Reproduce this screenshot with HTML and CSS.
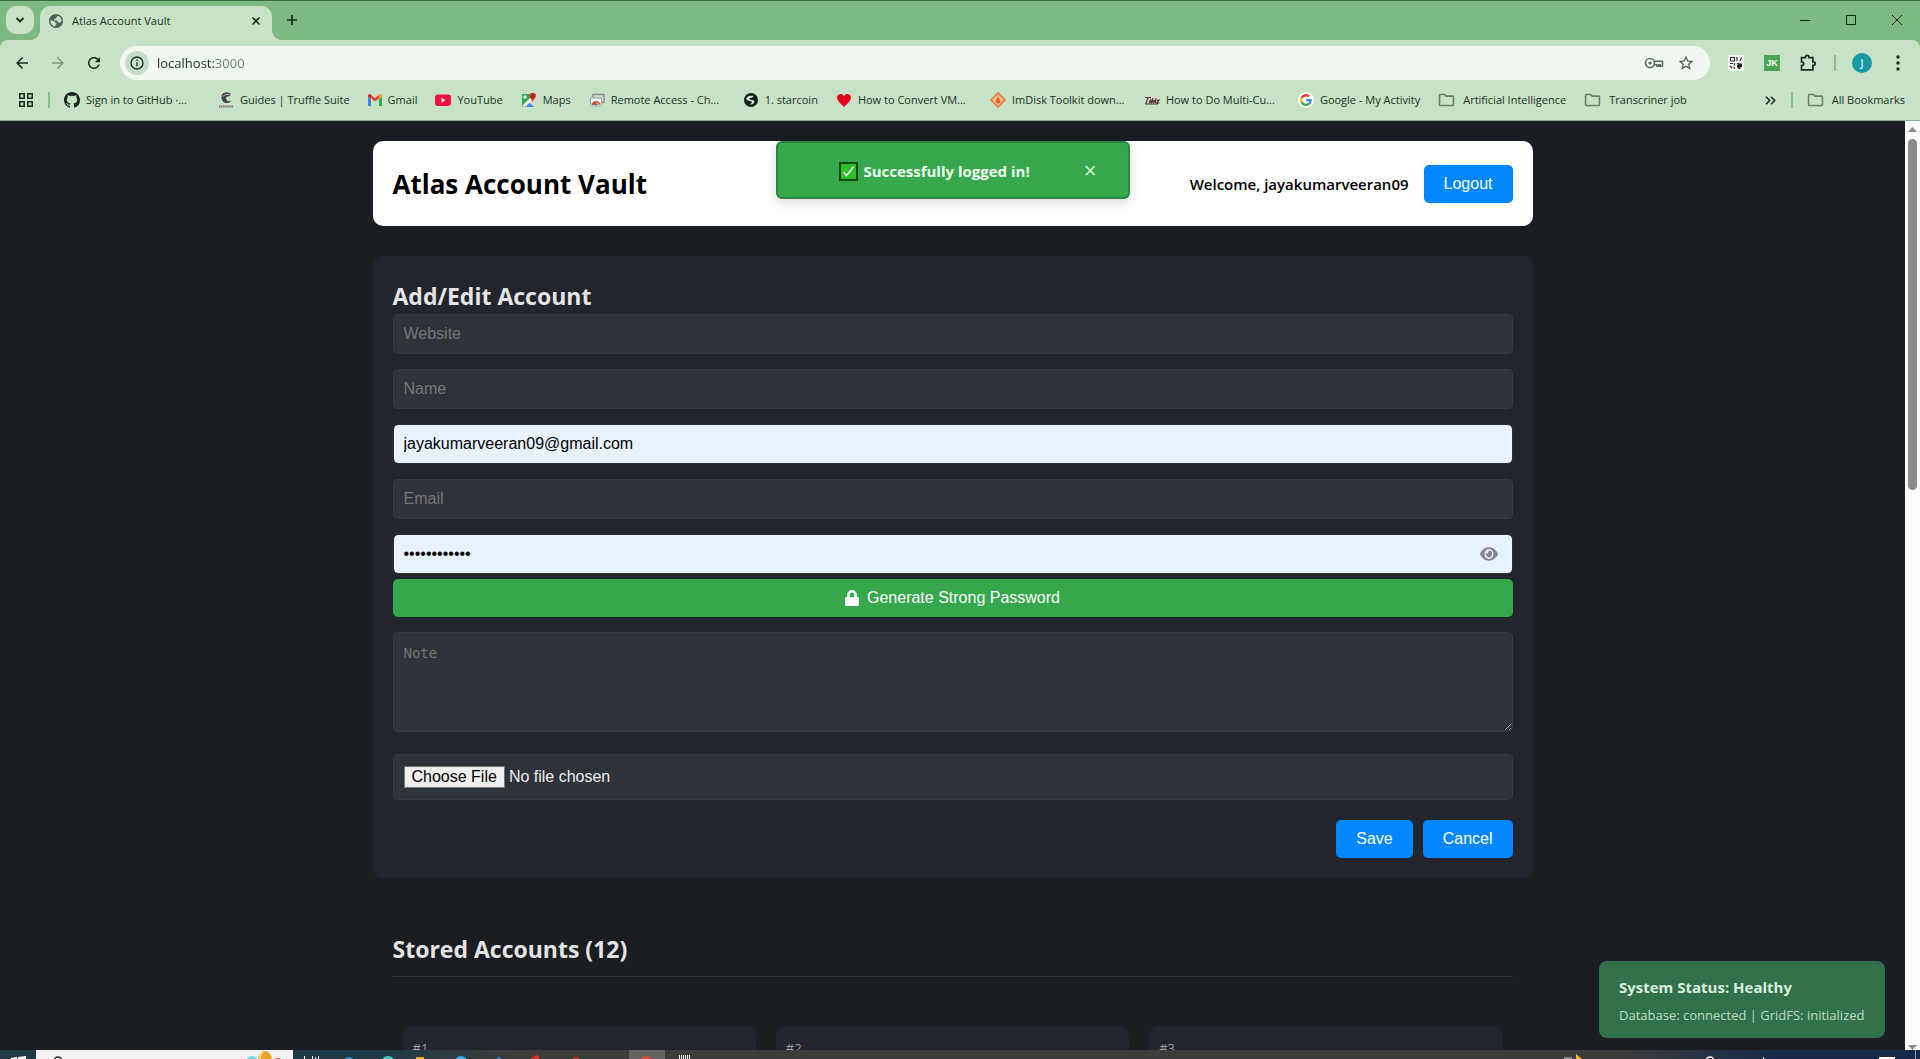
FILE: index.html
```html
<!DOCTYPE html>
<html lang="en">
<head>
<meta charset="utf-8">
<title>Atlas Account Vault</title>
<link rel="stylesheet" href="styles.css">
</head>
<body>
<svg class="defs" aria-hidden="true">
  <symbol id="globe" viewBox="2 2 20 20"><path d="M12 2C6.48 2 2 6.48 2 12s4.48 10 10 10 10-4.48 10-10S17.52 2 12 2zm-1 17.93c-3.95-.49-7-3.85-7-7.93l0-1L8 11.600c1.500 0 2.500 1 2.500 2.400h2v3c-.9 0-1.500.9-1.500 2.930zM20 12c-1 1.800-2.500 2.500-4 2.500-1 0-1-1.500-2-2.500-1.200-1-4.500.5-5-2 0-1.500 2-1 3-1.500 1-.6 0-2 1-2.500 1-.4 2-.9 2-1.410 2.930 1.190 5 4.060 5 7.410z"/></symbol>
  <symbol id="folder" viewBox="1 3 22 18"><path d="M9.170 6l2 2H20v10H4V6h5.170M10 4H4c-1.100 0-1.990.9-1.990 2L2 18c0 1.100.9 2 2 2h16c1.100 0 2-.9 2-2V8c0-1.100-.9-2-2-2h-8l-2-2z"/></symbol>
</svg>

<div class="window">
  <header class="chrome">
    <div class="tabstrip">
      <button class="tab-search" aria-label="Search tabs"><svg width="10" height="10" viewBox="0 0 10 10"><path d="M1.500 3l3.500 3.500L8.500 3" fill="none" stroke="#12301a" stroke-width="1.800"/></svg></button>
      <div class="tab">
        <svg class="tab-icon" width="14" height="14"><use href="#globe"/></svg>
        <span class="tab-title">Atlas Account Vault</span>
        <button class="plain" aria-label="Close tab"><svg width="10" height="10" viewBox="0 0 10 10"><path d="M1.500 1.500l7 7M8.500 1.500l-7 7" stroke="#12301a" stroke-width="1.600"/></svg></button>
      </div>
      <button class="plain new-tab" aria-label="New tab"><svg width="12" height="12" viewBox="0 0 12 12"><path d="M6 1v10M1 6h10" stroke="#12301a" stroke-width="1.700"/></svg></button>
      <div class="window-controls">
        <button class="plain" aria-label="Minimize"><svg width="10" height="10" viewBox="0 0 10 10"><path d="M0 5.500h10" stroke="#10220f"/></svg></button>
        <button class="plain" aria-label="Maximize"><svg width="10" height="10" viewBox="0 0 10 10"><path d="M.5.5h9v9h-9z" fill="none" stroke="#10220f"/></svg></button>
        <button class="plain" aria-label="Close"><svg width="10" height="10" viewBox="0 0 10 10"><path d="M0 0l10 10M10 0L0 10" stroke="#10220f"/></svg></button>
      </div>
    </div>

    <div class="toolbar">
      <button class="tool" aria-label="Back"><svg width="18" height="18" viewBox="0 0 24 24"><path d="M20 11H7.830l5.590-5.590L12 4l-8 8 8 8 1.410-1.410L7.830 13H20v-2z"/></svg></button>
      <button class="tool faded" aria-label="Forward"><svg width="18" height="18" viewBox="0 0 24 24"><path d="M4 11h12.170l-5.590-5.590L12 4l8 8-8 8-1.410-1.410L16.170 13H4v-2z"/></svg></button>
      <button class="tool" aria-label="Reload"><svg width="18" height="18" viewBox="0 0 24 24"><path d="M17.650 6.350C16.200 4.900 14.210 4 12 4c-4.420 0-7.990 3.580-7.990 8s3.570 8 7.990 8c3.730 0 6.840-2.550 7.730-6h-2.080c-.82 2.330-3.040 4-5.650 4-3.310 0-6-2.690-6-6s2.690-6 6-6c1.660 0 3.140.69 4.220 1.780L13 11h7V4l-2.350 2.350z"/></svg></button>
      <div class="omnibox">
        <button class="site-info" aria-label="Site information"><svg width="14" height="14" viewBox="0 0 14 14"><circle cx="7" cy="7" r="6" fill="none" stroke="#1c3322" stroke-width="1.400"/><path d="M7 6.200v4M7 3.500v1.500" stroke="#1c3322" stroke-width="1.400"/></svg></button>
        <input class="address" type="text" value="localhost:3000" aria-label="Address">
        <div class="omnibox-actions">
          <svg width="20" height="12" viewBox="0 0 20 12"><circle cx="6" cy="6" r="4.500" fill="none" stroke="#5c6b60" stroke-width="1.600"/><circle cx="6" cy="6" r="1.600" fill="#5c6b60"/><path d="M10.500 4.200h8v5h-2.200V7.800h-1.500v1.400h-2V7.800h-2.300" fill="none" stroke="#5c6b60" stroke-width="1.500"/></svg>
          <svg width="18" height="18" viewBox="0 0 24 24" fill="#4a574d"><path d="M22 9.240l-7.190-.62L12 2 9.190 8.630 2 9.240l5.460 4.730L5.820 21 12 17.270 18.180 21l-1.630-7.030L22 9.240zM12 15.400l-3.760 2.270 1-4.280-3.320-2.880 4.380-.38L12 6.100l1.710 4.040 4.380.38-3.320 2.880 1 4.280L12 15.400z"/></svg>
        </div>
      </div>
      <button class="tool" aria-label="QR extension"><svg width="16" height="16" viewBox="0 0 16 16"><rect width="16" height="16" rx="2" fill="#f5f5f5"/><path d="M2.500 2.500h4v3.500h-4zM9 2v4M9 8.500h2M13.500 2.500l-1.500 3.500M2 8.500h3M6.500 8v2.500M2 11l2 2M5.500 12l1.500 1.500" fill="none" stroke="#333" stroke-width="1.200"/><path d="M9 11a3 3 0 0 1 5-2v3h-1.500v2H11a3 3 0 0 1-2-3z" fill="#222"/></svg></button>
      <button class="tool" aria-label="JK extension"><span class="jk">JK</span></button>
      <button class="tool" aria-label="Extensions"><svg width="18" height="18" viewBox="0 0 18 18"><path d="M2.500 3.700h4V3a1.700 1.700 0 0 1 3.400 0v.7h4v4.200h.6a1.700 1.700 0 0 1 0 3.400h-.6v4.500H2.500v-4.300c2.800-.2 2.800-3.500 0-3.700z" fill="none" stroke="#14301c" stroke-width="1.700"/></svg></button>
      <span class="divider"></span>
      <button class="tool" aria-label="Profile"><span class="avatar">J</span></button>
      <button class="tool" aria-label="Menu"><svg width="4" height="16" viewBox="0 0 4 16"><circle cx="2" cy="2" r="1.700"/><circle cx="2" cy="8" r="1.700"/><circle cx="2" cy="14" r="1.700"/></svg></button>
    </div>

    <nav class="bookmarks" aria-label="Bookmarks">
      <button class="plain apps" aria-label="Apps"><svg width="14" height="14" viewBox="0 0 14 14"><path d="M.8.800h4.400v4.400H.8zM8.800.800h4.400v4.400H8.800zM.8 8.800h4.400v4.400H.8zM8.800 8.800h4.400v4.400H8.800z" fill="none" stroke="#14301c" stroke-width="1.600"/></svg></button>
      <span class="divider"></span>
      <a class="bookmark wide" href="#"><svg width="16" height="16" viewBox="0 0 16 16" fill="#1c2620"><path d="M8 0C3.580 0 0 3.580 0 8c0 3.540 2.290 6.530 5.470 7.590.4.070.55-.17.55-.38 0-.19-.01-.82-.01-1.490-2.010.37-2.530-.49-2.690-.94-.09-.23-.48-.94-.82-1.130-.28-.15-.68-.52-.01-.53.63-.01 1.080.58 1.230.82.72 1.210 1.870.87 2.330.66.070-.52.28-.87.51-1.070-1.780-.2-3.640-.89-3.640-3.950 0-.87.31-1.590.82-2.150-.08-.2-.36-1.020.08-2.120 0 0 .67-.21 2.200.82.64-.18 1.320-.27 2-.27.68 0 1.360.09 2 .27 1.530-1.040 2.200-.82 2.200-.82.44 1.100.16 1.920.08 2.120.51.56.82 1.270.82 2.150 0 3.070-1.870 3.750-3.650 3.950.29.25.54.73.54 1.480 0 1.070-.01 1.930-.01 2.200 0 .21.15.46.55.38A8.010 8.010 0 0016 8c0-4.420-3.580-8-8-8z"/></svg>Sign in to GitHub ·...</a>
      <a class="bookmark" href="#"><svg width="16" height="16" viewBox="0 0 16 16"><path d="M12.500 1.500C9-.8 4 .5 3.500 4.200 3 8 5.500 11 9 11c2 0 3.500-1 4-2.300C11 9.700 8.500 9 8 6.500 7.800 4.500 10 4.500 12 4z" fill="#4c4350"/><path d="M5 4.500c1-2 4-2.500 6.500-2" stroke="#cfe5cf" stroke-width=".8" fill="none"/><path d="M1 14.500h14" stroke="#8d6a78" stroke-width="2" stroke-dasharray="1.500 .6"/></svg>Guides | Truffle Suite</a>
      <a class="bookmark" href="#"><svg width="14" height="16" viewBox="1 0 14 16"><path d="M1 4v10h3V7z" fill="#4285f4"/><path d="M12 7v7h3V4z" fill="#34a853"/><path d="M1 4l7 5.500L15 4c0-1.800-2-2-3-1.200L8 6 4 2.800C3 2 1 2.200 1 4z" fill="#ea4335"/><path d="M12 3v3.500l3-2.300c0-2-2-2.200-3-1.200z" fill="#fbbc04"/><path d="M1 4.200l3 2.300V3C3 2 1 2.200 1 4.200z" fill="#c5221f"/></svg>Gmail</a>
      <a class="bookmark" href="#"><svg width="16" height="16" viewBox="0 0 16 16"><rect y="2.500" width="16" height="11.500" rx="3" fill="#f0103c"/><path d="M6.500 5.800v4.900l4-2.450z" fill="#fff"/></svg>YouTube</a>
      <a class="bookmark" href="#"><svg width="16" height="16" viewBox="0 0 16 16"><path d="M1 2h9v6L2 15 1 14z" fill="#34a853"/><path d="M3 15l5-5 5 5z" fill="#4285f4"/><path d="M1.500 13.500L10 5l2 3-8 7z" fill="#eef3ee"/><path d="M9 9l5 5V8z" fill="#d5d9d5"/><circle cx="4" cy="5" r="1.700" fill="#d8f0dc"/><path d="M8.500 4a3.200 3.200 0 0 1 6.400 0c0 2.500-2.600 3-3.200 6.500C11 7 8.500 6.500 8.500 4z" fill="#d93025"/><circle cx="11.700" cy="4" r="1.200" fill="#7d1b14"/></svg>Maps</a>
      <a class="bookmark wide" href="#"><svg width="16" height="16" viewBox="0 0 16 16"><path d="M4 5V2.500h11v8h-2" fill="none" stroke="#8d8f96" stroke-width="1.500"/><path d="M1.500 6h11v6h-11z" fill="#f2f2f2" stroke="#9a9ca3"/><path d="M3 13a4 4 0 0 1 8 0z" fill="#db4437"/><path d="M7 9.500l4 3.500H7z" fill="#f4c20d"/><circle cx="7" cy="12.500" r="1.500" fill="#4285f4"/><path d="M0 14h14" stroke="#b9bbc0"/></svg>Remote Access - Ch...</a>
      <a class="bookmark" href="#"><svg width="16" height="16" viewBox="0 0 16 16"><circle cx="8" cy="8" r="7" fill="#141c18"/><path d="M3 7c1.500-4 5-3.500 7.500-3-1 2.500-4 1-4 3 1 1.500 5 .5 5 2.500-.5 2-2.500 3.500-4.500 3 .5-1.500 2-1 2-2.500C8 8.500 5.500 9.500 3 7z" fill="#d9ecd9"/></svg>1. starcoin</a>
      <a class="bookmark wide" href="#"><svg width="16" height="16" viewBox="0 0 16 16"><path d="M8 15C5 12 1 9 1 5.500 1 1.500 6 .8 8 4c2-3.200 7-2.500 7 1.500C15 9 11 12 8 15z" fill="#e3051b"/></svg>How to Convert VM...</a>
      <a class="bookmark wide" href="#"><svg width="16" height="16" viewBox="0 0 16 16"><path d="M8 1l7 7-7 7-7-7z" fill="#f6c6a0" stroke="#e8834a" stroke-width="1.800"/><path d="M8 4c0 2 2.500 3 2.500 5a2.500 2.500 0 0 1-5 0c0-1.500 1.500-2 2.500-5z" fill="#e0662c"/></svg>ImDisk Toolkit down...</a>
      <a class="bookmark wide" href="#"><svg width="16" height="16" viewBox="0 0 16 16"><path d="M1 5.500h6M4 5.500l-2 6M5 11l1.500-3 .5 3 1.500-3.500M9 6l-1 5M10 8l-.5 3 2-3M12 6l-.5 5M13 8.500l2-.5-2 3h2.500M1 12h13" fill="none" stroke="#5b3236" stroke-width="1.200"/></svg>How to Do Multi-Cu...</a>
      <a class="bookmark" href="#"><svg width="16" height="16" viewBox="-8 -8 64 64"><circle cx="24" cy="24" r="32" fill="#fff"/><path fill="#EA4335" d="M24 9.500c3.540 0 6.710 1.220 9.210 3.600l6.850-6.850C35.900 2.380 30.470 0 24 0 14.620 0 6.510 5.380 2.560 13.220l7.980 6.190C12.430 13.720 17.740 9.500 24 9.500z"/><path fill="#4285F4" d="M46.980 24.550c0-1.570-.15-3.090-.38-4.550H24v9.020h12.940c-.58 2.960-2.260 5.480-4.780 7.180l7.730 6c4.510-4.180 7.090-10.360 7.090-17.650z"/><path fill="#FBBC05" d="M10.530 28.590c-.48-1.450-.76-2.990-.76-4.590s.27-3.140.76-4.590l-7.980-6.190C.92 16.460 0 20.120 0 24s.92 7.540 2.560 10.780l7.970-6.190z"/><path fill="#34A853" d="M24 48c6.480 0 11.930-2.130 15.890-5.810l-7.730-6c-2.150 1.450-4.920 2.300-8.160 2.300-6.260 0-11.570-4.220-13.470-9.910l-7.980 6.190C6.510 42.620 14.620 48 24 48z"/></svg>Google - My Activity</a>
      <a class="bookmark folder" href="#"><svg width="17" height="14"><use href="#folder"/></svg>Artificial Intelligence</a>
      <a class="bookmark folder" href="#"><svg width="17" height="14"><use href="#folder"/></svg>Transcriner job</a>
      <button class="plain more" aria-label="More bookmarks"><svg width="11" height="9" viewBox="0 0 11 9"><path d="M1 .8l3.700 3.700L1 8.200M6 .8l3.700 3.700L6 8.200" fill="none" stroke="#14301c" stroke-width="1.600"/></svg></button>
      <span class="divider"></span>
      <a class="bookmark folder" href="#"><svg width="17" height="14"><use href="#folder"/></svg>All Bookmarks</a>
    </nav>
  </header>

  <div class="viewport">
    <div class="page">
      <main class="container">
        <div class="app-header">
          <h1>Atlas Account Vault</h1>
          <div class="user">
            <span class="welcome">Welcome, jayakumarveeran09</span>
            <button class="btn">Logout</button>
          </div>
          <div class="toast" role="status">
            <span class="toast-text"><svg width="19" height="19" viewBox="0 0 19 19"><path d="M1 1h17v17H1z" fill="#2fbf2a" stroke="#0d4a12" stroke-width="2"/><path d="M4.500 10l3 3.500L14.500 5" fill="none" stroke="#e9ffe9" stroke-width="1.600"/></svg>Successfully logged in!</span>
            <button class="toast-close" aria-label="Dismiss">×</button>
          </div>
        </div>

        <form class="card">
          <h2>Add/Edit Account</h2>
          <input class="field" type="text" placeholder="Website" aria-label="Website">
          <input class="field" type="text" placeholder="Name" aria-label="Name">
          <input class="field filled" type="text" value="jayakumarveeran09@gmail.com" aria-label="Username">
          <input class="field" type="email" placeholder="Email" aria-label="Email">
          <div class="password">
            <input class="field filled" type="password" value="vaultsecret1" aria-label="Password">
            <button type="button" class="reveal" aria-label="Show password"><svg width="18" height="18" viewBox="0 0 576 512" preserveAspectRatio="none"><path d="M572.520 241.400C518.290 135.590 410.930 64 288 64S57.680 135.640 3.480 241.410a32.350 32.350 0 0 0 0 29.190C57.710 376.410 165.070 448 288 448s230.320-71.640 284.520-177.410a32.350 32.350 0 0 0 0-29.190zM288 400a144 144 0 1 1 144-144 143.930 143.930 0 0 1-144 144zm0-240a95.310 95.310 0 0 0-25.310 3.790 47.850 47.850 0 0 1-66.900 66.900A95.780 95.780 0 1 0 288 160z"/></svg></button>
          </div>
          <button type="button" class="btn generate"><svg width="14" height="16" viewBox="0 0 448 512"><path d="M400 224h-24v-72C376 68.200 307.800 0 224 0S72 68.200 72 152v72H48c-26.500 0-48 21.500-48 48v192c0 26.500 21.500 48 48 48h352c26.500 0 48-21.500 48-48V272c0-26.500-21.500-48-48-48zm-104 0H152v-72c0-39.700 32.300-72 72-72s72 32.300 72 72v72z"/></svg>Generate Strong Password</button>
          <textarea class="field note" placeholder="Note" aria-label="Note"></textarea>
          <input class="field file" type="file" aria-label="Attachment">
          <div class="actions">
            <button type="button" class="btn">Save</button>
            <button type="button" class="btn">Cancel</button>
          </div>
        </form>

        <section class="stored">
          <h2>Stored Accounts (12)</h2>
          <div class="accounts">
            <article class="account">#1</article>
            <article class="account">#2</article>
            <article class="account">#3</article>
          </div>
        </section>
      </main>
      <aside class="status">
        <strong>System Status: Healthy</strong>
        <span>Database: connected | GridFS: initialized</span>
      </aside>
    </div>
    <div class="scrollbar" aria-hidden="true">
      <svg width="9" height="5" viewBox="0 0 9 5"><path d="M0 5L4.500 0 9 5z" fill="#8b8b8b"/></svg>
      <div class="track"><div class="thumb"></div></div>
      <svg width="9" height="5" viewBox="0 0 9 5"><path d="M0 0l4.500 5L9 0z" fill="#8b8b8b"/></svg>
    </div>
  </div>

  <footer class="taskbar" aria-hidden="true">
    <svg width="720" height="9" viewBox="0 0 720 9">
      <path d="M11 9V8l6-1v2zM18 7l8-1v3h-8z" fill="#fff"/>
      <path d="M36 0h257v9H36z" fill="#f2f2f2"/>
      <circle cx="58" cy="11" r="4" fill="none" stroke="#222" stroke-width="1.500"/>
      <circle cx="252" cy="12" r="6" fill="#6fdde0"/><circle cx="278" cy="14" r="6" fill="#e2474b"/><ellipse cx="265" cy="10" rx="7" ry="9" fill="#e8a32c"/><path d="M260 9c0-4 2-7 4-8" stroke="#f8d67a" stroke-width="2" fill="none"/>
      <path d="M304.500 6v3M312.500 6v3M315.500 7v2M318.500 6v3" stroke="#fff"/>
      <circle cx="349" cy="12" r="5" fill="#1f8fe0"/><circle cx="388" cy="13" r="7" fill="#3fc7b8"/><path d="M416 7h8v2h-8z" fill="#f0ad1a"/><circle cx="461" cy="12" r="6" fill="#2fb3e6"/><path d="M497 9l2-3 2 3z" fill="#2e86d8"/><path d="M530 9l6-4 3 1v3z" fill="#e22c2c"/><circle cx="576" cy="12" r="5" fill="#d32f2f"/>
      <path d="M629 0h36v9h-36z" fill="#666462"/><circle cx="646" cy="12" r="6" fill="#e04a38"/>
      <path d="M679 7h12" stroke="#e6f1f5" stroke-width="4" stroke-dasharray="1 1"/>
    </svg>
    <svg width="360" height="9" viewBox="0 0 360 9">
      <path d="M16 4l6 5h-6z" fill="#f2b63a"/><path d="M4 8h8" stroke="#888" stroke-width="2"/>
      <circle cx="150" cy="11" r="4" fill="none" stroke="#fff" stroke-width="1.500"/><path d="M203.500 7v2" stroke="#fff"/><path d="M319 7h16v2h-16z" fill="#fff"/><path d="M355.500 0v9" stroke="#8fa0bc"/>
    </svg>
  </footer>
</div>
</body>
</html>
```
FILE: styles.css
```css
* { box-sizing: border-box; }

body {
  margin: 0;
  background: #1a1d21;
  color: #e4e4e6;
  font: 15px/20px "Open Sans", "Noto Sans", sans-serif;
}

button, input, textarea { font: 16px/18px "Liberation Sans", Arial, sans-serif; }
button { border: 0; padding: 0; cursor: pointer; }
h1, h2 { margin: 0; }
svg { flex: none; }

.defs { position: absolute; width: 0; height: 0; }

.window {
  display: grid;
  grid-template-rows: auto minmax(0, 1fr) auto;
  height: 100vh;
}

/* Browser frame */
.chrome {
  background: #7cba7f;
  border-top: 1px solid #3c6b3f;
  border-bottom: 1px solid #8fa898;
  color: #1b3322;
  font-size: 11px;
}
.tabstrip {
  display: flex;
  align-items: flex-start;
  height: 39px;
  padding: 5px 0 0 6px;
}
.plain { display: grid; place-items: center; background: none; }
.tab-search {
  display: grid;
  place-items: center;
  width: 28px;
  height: 28px;
  margin-right: 6px;
  border-radius: 10px;
  background: #c7e2c6;
}
.tab {
  position: relative;
  display: flex;
  align-items: center;
  width: 232px;
  height: 34px;
  padding: 0 11px 4px 9px;
  border-radius: 10px 10px 0 0;
  background: #c7e2c6;
}
.tab::before, .tab::after {
  content: "";
  position: absolute;
  bottom: 0;
  width: 10px;
  height: 10px;
}
.tab::before { right: 100%; background: radial-gradient(circle at 0 0, transparent 10px, #c7e2c6 10px); }
.tab::after { left: 100%; background: radial-gradient(circle at 100% 0, transparent 10px, #c7e2c6 10px); }
.tab-icon { fill: #50605a; }
.tab-title { flex: 1; margin-left: 9px; }
.new-tab { width: 28px; height: 28px; margin-left: 6px; }
.window-controls { display: flex; margin-left: auto; }
.window-controls .plain { width: 46px; height: 28px; }

.toolbar {
  display: flex;
  align-items: center;
  height: 46px;
  padding: 0 4px;
  border-radius: 8px 8px 0 0;
  background: #c7e2c6;
}
.tool {
  display: grid;
  place-items: center;
  width: 36px;
  height: 34px;
  background: none;
  fill: #14301c;
}
.faded { fill: #7f9c83; }
.omnibox {
  display: flex;
  flex: 1;
  align-items: center;
  gap: 8px;
  height: 34px;
  margin: 0 8px;
  padding: 0 15px 0 5px;
  border-radius: 17px;
  background: #f0f8f0;
}
.omnibox-actions { display: flex; align-items: center; gap: 13px; }
.site-info {
  display: grid;
  place-items: center;
  width: 24px;
  height: 24px;
  border-radius: 50%;
  background: #c9dccb;
}
.address {
  flex: 1;
  min-width: 0;
  padding: 0;
  border: 0;
  outline: 0;
  background: linear-gradient(90deg, #1c2b21 58px, #6d7a70 58px) text;
  color: transparent;
  font: 13px/18px "Open Sans", sans-serif;
}
.jk {
  width: 16px;
  background: #4ba651;
  color: #fff;
  font: bold 9px/16px "Liberation Sans", Arial, sans-serif;
}
.avatar {
  width: 20px;
  border-radius: 50%;
  background: #189aa5;
  color: #fff;
  font: 11px/20px "Open Sans", sans-serif;
}
.divider { width: 2px; height: 16px; margin: 0 8px; background: #86bf89; }

.bookmarks {
  display: flex;
  align-items: center;
  gap: 18px;
  height: 34px;
  padding: 0 15px 6px 19px;
  background: #c7e2c6;
  white-space: nowrap;
}
.bookmarks .divider { margin: 0 -4px 0 -3px; }
.bookmark {
  display: flex;
  align-items: center;
  gap: 6px;
  color: inherit;
  text-decoration: none;
}
.wide { width: 136px; }
.folder { gap: 8px; fill: #5f8266; }
.more { margin-left: auto; }

/* Page */
.viewport { display: flex; min-height: 0; }
.page { position: relative; flex: 1; overflow: hidden; padding: 20px; }
.container { max-width: 1160px; margin: 0 auto; }

.app-header {
  position: relative;
  display: flex;
  align-items: center;
  justify-content: space-between;
  height: 85px;
  padding: 0 20px;
  border-radius: 10px;
  background: #fff;
  color: #000;
}
h1 { font-size: 26px; line-height: 36px; }
h2 { font-size: 23px; line-height: 32px; }
.user { display: flex; align-items: center; gap: 15px; }
.welcome { font-weight: 600; }

.btn {
  height: 38px;
  padding: 0 20px;
  border-radius: 5px;
  background: #0087ff;
  color: #fff;
}
.toast {
  position: absolute;
  top: 0;
  left: 50%;
  display: flex;
  align-items: center;
  width: 354px;
  height: 58px;
  padding: 2px 31px 0 8px;
  transform: translateX(-50%);
  border: 2px solid #2b8440;
  border-radius: 6px;
  background: #36a84b;
  box-shadow: 0 4px 12px rgba(0, 0, 0, .15);
  color: #f0fff0;
  font-weight: 700;
}
.toast-text { display: flex; flex: 1; align-items: center; justify-content: center; gap: 5px; }
.toast-close { background: none; color: #d5f0d9; font-size: 22px; line-height: 22px; }

.card {
  display: flex;
  flex-direction: column;
  margin-top: 30px;
  padding: 24px 20px 20px;
  border-radius: 10px;
  background: #22252d;
}
.card h2 { height: 34px; }
.field {
  width: 100%;
  height: 40px;
  margin-bottom: 15px;
  padding: 0 10px;
  border: 1px solid #373c43;
  border-radius: 5px;
  outline: 0;
  background: #2d3339;
  color: #f0f0f0;
}
.field::placeholder { color: #757779; }
.filled { border-color: #2d3239; background: #e8f1fe; background-clip: padding-box; color: #000; }
.password { position: relative; }
.password .field { display: block; margin-bottom: 5px; }
.reveal {
  position: absolute;
  top: 11px;
  right: 15px;
  height: 18px;
  background: none;
  fill: #82878f;
}
.generate {
  display: flex;
  align-items: center;
  justify-content: center;
  gap: 8px;
  margin-bottom: 15px;
  background: #36a84b;
  fill: #fff;
}
.note {
  height: 100px;
  margin-bottom: 22px;
  padding: 10px;
  font: 14px/20px "DejaVu Sans Mono", monospace;
}
.file { height: 46px; margin-bottom: 20px; padding: 11px 10px; }
.file::file-selector-button {
  height: 22px;
  margin-right: 4px;
  padding: 0 7px;
  border: 1px solid #767676;
  border-radius: 0;
  background: #efefef;
  color: #000;
  font: inherit;
}
.actions { display: flex; justify-content: flex-end; gap: 10px; }

.stored { margin-top: 50px; padding: 0 20px; }
.stored h2 { padding: 5px 0 11px; border-bottom: 1px solid #30353a; }
.accounts {
  display: grid;
  grid-template-columns: repeat(3, 1fr);
  gap: 20px;
  padding: 49px 10px 20px;
}
.account {
  height: 200px;
  padding: 12px 10px;
  border-radius: 10px;
  background: #22252d;
  color: #9a9ca1;
  font-size: 13px;
}

.status {
  position: absolute;
  right: 20px;
  bottom: 12px;
  display: flex;
  flex-direction: column;
  gap: 8px;
  width: 286px;
  padding: 15px 20px 13px;
  border-radius: 8px;
  background: #32704b;
  color: #d8f0dc;
  white-space: nowrap;
}
.status strong { font-size: 15px; line-height: 22px; }
.status span { color: #b9dfc3; font-size: 13px; line-height: 19px; }

.scrollbar {
  display: flex;
  flex-direction: column;
  align-items: center;
  width: 15px;
  padding: 6px 0 0;
  background: #fcfcfc;
}
.track { flex: 1; padding: 7px 0; }
.thumb { width: 9px; height: 39%; border-radius: 5px; background: #8b8b8b; }

.taskbar {
  display: flex;
  justify-content: space-between;
  height: 9px;
  background: linear-gradient(90deg, #213a44 0, #1f3a45 20%, #3d3c3a 27%, #3d3c3a 84%, #16294a 93%);
}
```
